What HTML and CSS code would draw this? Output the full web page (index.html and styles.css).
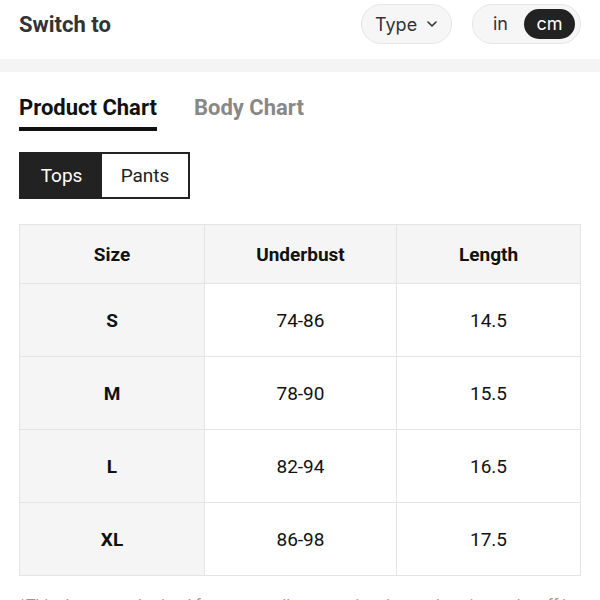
FILE: index.html
```html
<!DOCTYPE html>
<html>
<head>
<meta charset="utf-8">
<link rel="stylesheet" href="styles.css">
</head>
<body>
<header class="top">
  <h1 class="title">Switch to</h1>
  <div class="controls">
    <button class="pill type">Type
      <svg width="12" height="8" viewBox="0 0 12 8"><path d="M2 2 L6 6 L10 2" fill="none" stroke="#333" stroke-width="1.6" stroke-linecap="round" stroke-linejoin="round"/></svg>
    </button>
    <div class="pill units"><span class="unit">in</span><span class="unit active">cm</span></div>
  </div>
</header>
<div class="band"></div>
<main class="content">
  <nav class="tabs">
    <span class="tab active">Product Chart</span>
    <span class="tab">Body Chart</span>
  </nav>
  <div class="seg">
    <span class="seg-item on">Tops</span>
    <span class="seg-item">Pants</span>
  </div>
  <table class="chart">
    <thead>
      <tr><th>Size</th><th>Underbust</th><th>Length</th></tr>
    </thead>
    <tbody>
      <tr><th>S</th><td>74-86</td><td>14.5</td></tr>
      <tr><th>M</th><td>78-90</td><td>15.5</td></tr>
      <tr><th>L</th><td>82-94</td><td>16.5</td></tr>
      <tr><th>XL</th><td>86-98</td><td>17.5</td></tr>
    </tbody>
  </table>
  <p class="note">*This data was obtained from manually measuring the product, it may be off by 1-2 CM.</p>
</main>
</body>
</html>
```
FILE: styles.css
```css
* { box-sizing: border-box; }
body {
  margin: 0;
  font-family: Roboto, "Liberation Sans", Arial, sans-serif;
  color: #222;
  background: #fff;
}
.top {
  display: flex;
  align-items: center;
  justify-content: space-between;
  height: 48px;
  padding: 0 19px;
}
.title {
  margin: 0;
  font-size: 22px;
  font-weight: 700;
  color: #333;
}
.controls {
  display: flex;
  gap: 20px;
  align-items: center;
}
.pill {
  height: 40px;
  border-radius: 20px;
  background: #f6f6f6;
  border: 1px solid #e6e6e6;
  display: flex;
  align-items: center;
  font-family: Inter, Roboto, sans-serif;
  font-size: 18px;
  color: #333;
}
.type {
  width: 91px;
  padding: 0 0 0 13px;
  gap: 9px;
}
.units {
  width: 109px;
  padding: 0 5px 0 20px;
  justify-content: space-between;
}
.unit { line-height: 30px; }
.unit.active {
  background: #222;
  color: #fff;
  border-radius: 15px;
  width: 51px;
  text-align: center;
}
.band {
  height: 13px;
  margin-top: 11px;
  background: #f4f4f4;
}
.content {
  padding: 0 19px;
}
.tabs {
  display: flex;
  gap: 37px;
  margin-top: 23px;
}
.tab {
  font-size: 22px;
  line-height: 26px;
  font-weight: 700;
  color: #888;
  padding-bottom: 6px;
  border-bottom: 4px solid transparent;
}
.tab.active {
  color: #111;
  border-bottom-color: #111;
}
.seg {
  display: inline-flex;
  margin-top: 21px;
  border: 2px solid #222;
  height: 47px;
}
.seg-item {
  display: flex;
  align-items: center;
  justify-content: center;
  font-size: 19px;
  color: #222;
  width: 86px;
}
.seg-item.on {
  background: #222;
  color: #fff;
  width: 81px;
}
.chart {
  width: 562px;
  margin-top: 25px;
  border-collapse: collapse;
  table-layout: fixed;
  font-size: 19px;
}
.chart th, .chart td {
  border: 1px solid #e4e4e4;
  text-align: center;
  color: #111;
  padding: 0;
}
.chart thead th {
  background: #f5f5f5;
  height: 59px;
  font-weight: 700;
}
.chart thead th:nth-child(1) { width: 185px; }
.chart thead th:nth-child(2) { width: 192px; }
.chart tbody th {
  background: #f5f5f5;
  font-weight: 700;
}
.chart tbody tr { height: 73px; }
.note {
  margin: 20px 0 0;
  font-size: 16px;
  color: #999;
}
```
